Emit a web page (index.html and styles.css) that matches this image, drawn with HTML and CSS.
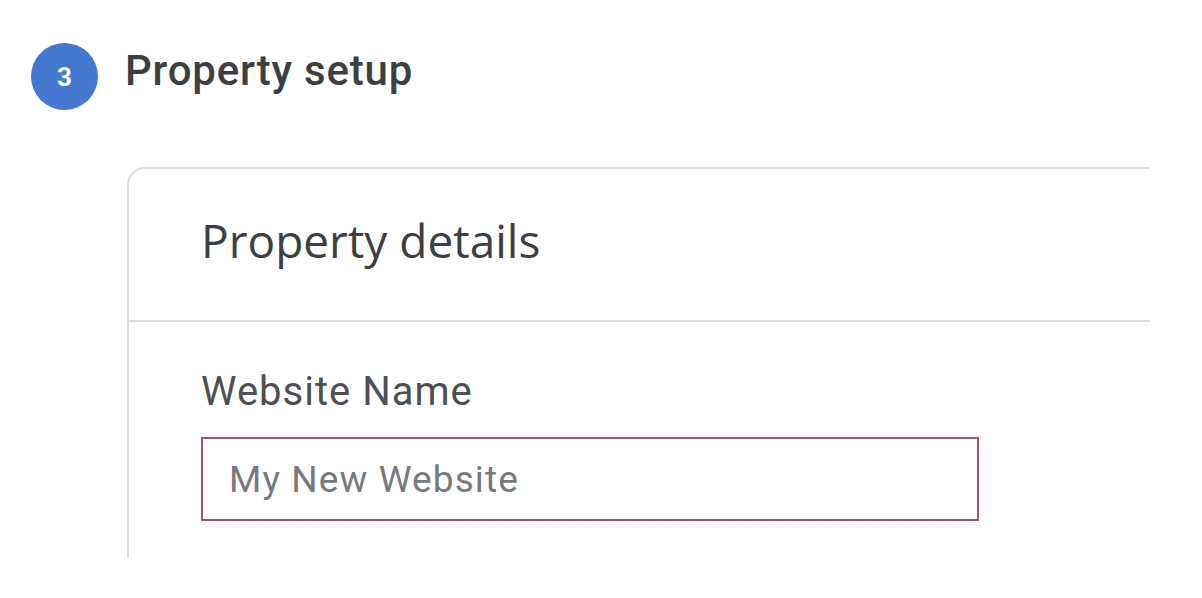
FILE: index.html
```html
<!DOCTYPE html>
<html>
<head>
<meta charset="utf-8">
<link rel="stylesheet" href="styles.css">
</head>
<body>
<div class="frame">
  <div class="step">
    <div class="step-num">3</div>
    <div class="step-title">Property setup</div>
  </div>
  <div class="card">
    <div class="card-head">Property details</div>
    <div class="card-body">
      <label class="field-label">Website Name</label>
      <div class="input">My New Website</div>
    </div>
  </div>
</div>
</body>
</html>
```

FILE: styles.css
```css
html, body {
  margin: 0;
  padding: 0;
  background: #fff;
}
.frame {
  width: 1150px;
  height: 558px;
  overflow: hidden;
  font-family: Roboto, "Liberation Sans", sans-serif;
}
.step {
  display: flex;
  align-items: center;
  gap: 27px;
  padding: 43px 0 0 31px;
}
.step-num {
  width: 67px;
  height: 67px;
  border-radius: 50%;
  background: #4479cf;
  color: #fff;
  font-weight: 700;
  font-size: 26px;
  display: flex;
  align-items: center;
  justify-content: center;
}
.step-title {
  font-size: 42px;
  letter-spacing: 0.8px;
  font-weight: 500;
  color: #3c4043;
  padding-bottom: 13px;
}
.card {
  margin: 57px 0 0 127px;
  width: 1100px;
  border: 2px solid #dadce0;
  border-radius: 18px;
}
.card-head {
  font-family: "Open Sans", sans-serif;
  font-size: 46px;
  line-height: 63px;
  color: #3c4043;
  padding: 40px 0 0 72px;
  height: 111px;
  box-sizing: content-box;
  border-bottom: 2px solid #dadce0;
}
.card-body {
  padding: 46px 0 120px 72px;
}
.field-label {
  display: block;
  font-size: 40px;
  letter-spacing: 1px;
  color: #4d4f52;
  line-height: 48px;
}
.input {
  margin-top: 21px;
  width: 778px;
  height: 84px;
  box-sizing: border-box;
  border: 2px solid #a05565;
  padding: 0 26px;
  display: flex;
  align-items: center;
  font-size: 37px;
  letter-spacing: 1.1px;
  color: #77797c;
}
```
